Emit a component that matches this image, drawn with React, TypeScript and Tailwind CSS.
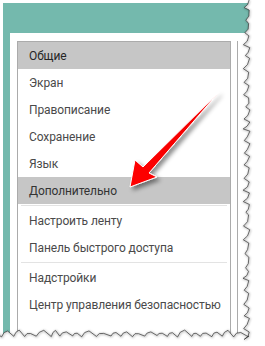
import React from "react";

function rand(seed: number) {
  const x = Math.sin(seed * 12.9898 + 78.233) * 43758.5453;
  return x - Math.floor(x);
}

function buildTornPath() {
  const right: [number, number][] = [];
  let y = 0;
  let i = 0;
  while (y < 332) {
    const period = 9 + rand(i) * 6;
    const amp = 4 + rand(i + 100) * 3;
    right.push([250 - rand(i + 200) * 1.5, y]);
    right.push([250 - amp * 0.5 + rand(i + 300), y + period * 0.45]);
    right.push([250 - amp, y + period * 0.75]);
    y += period;
    i++;
  }
  const bottom: [number, number][] = [];
  let x = 248;
  i = 50;
  while (x > 0) {
    const period = 8 + rand(i) * 7;
    const amp = 3 + rand(i + 100) * 4;
    bottom.push([x, 337 - rand(i + 200) * 1.5]);
    bottom.push([x - period * 0.5, 337 - amp]);
    bottom.push([x - period * 0.8, 335 - amp * 0.4]);
    x -= period;
    i++;
  }
  bottom.push([0, 334]);
  const edge = [...right, [249, 336] as [number, number], ...bottom];
  const edgeD = edge.map((p, k) => `${k === 0 ? "M" : "L"}${p[0].toFixed(1)},${p[1].toFixed(1)}`).join(" ");
  const fillD = `${edgeD} L0,346 L265,346 L265,0 Z`;
  return { edgeD, fillD };
}

const items = [
  { label: "Общие", sel: true, dark: true },
  { label: "Экран" },
  { label: "Правописание" },
  { label: "Сохранение" },
  { label: "Язык" },
  { label: "Дополнительно", sel: true },
  { sep: true },
  { label: "Настроить ленту" },
  { label: "Панель быстрого доступа" },
  { sep: true },
  { label: "Надстройки" },
  { label: "Центр управления безопасностью" },
];

export default function App() {
  const { edgeD, fillD } = buildTornPath();
  return (
    <div
      className="relative w-[265px] h-[346px] overflow-hidden bg-white"
      style={{ fontFamily: 'Roboto, "Noto Sans", sans-serif' }}
    >
      <div className="absolute left-[3px] top-[3px] w-[252px] h-[340px] bg-[#74b9ad] flex flex-col">
        <div className="h-[30px] shrink-0" />
        <div className="ml-[7px] flex-1 bg-white flex pt-[8px] pl-[7px]">
          <div className="w-[214px] shrink-0 border border-[#ababab] border-b-0 flex flex-col">
            {items.map((it, k) =>
              it.sep ? (
                <div key={k} className="h-[3px] shrink-0 flex items-center px-[3px]">
                  <div className="h-px w-full bg-[#e3e3e3]" />
                </div>
              ) : (
                <div
                  key={k}
                  className={`h-[27px] shrink-0 flex items-center pl-[11px] text-[12px] tracking-[-0.1px] whitespace-nowrap ${
                    it.sel ? "bg-[#c6c6c6]" : ""
                  } ${it.dark ? "text-[#262626]" : it.sel ? "text-[#333333]" : "text-[#4a4a4a]"}`}
                >
                  {it.label}
                </div>
              )
            )}
          </div>
          <div className="w-[6px] shrink-0" />
          <div className="w-px shrink-0 bg-[#ababab]" />
        </div>
      </div>

      <svg className="absolute inset-0" width={265} height={346} viewBox="0 0 265 346">
        <defs>
          <filter id="edgeShadow" x="-10%" y="-10%" width="120%" height="120%">
            <feGaussianBlur stdDeviation="0.8" />
          </filter>
          <filter id="arrowShadow" x="-30%" y="-30%" width="160%" height="160%">
            <feDropShadow dx="3" dy="3" stdDeviation="2" floodColor="#000" floodOpacity="0.45" />
          </filter>
          <linearGradient id="arrowGrad" x1="0" y1="1" x2="1" y2="0">
            <stop offset="0" stopColor="#ff0000" />
            <stop offset="0.7" stopColor="#f40000" />
            <stop offset="1" stopColor="#ff3030" />
          </linearGradient>
        </defs>
        <path d={fillD} fill="#ffffff" />
        <path d={edgeD} fill="none" stroke="#000" strokeOpacity="0.25" strokeWidth="1.6" filter="url(#edgeShadow)" transform="translate(0.5,0.5)" />
        <path d={edgeD} fill="none" stroke="#333" strokeWidth="0.7" />
        <polygon
          points="130,187 135,160 143,167 219,92 149,173 157,177"
          fill="url(#arrowGrad)"
          stroke="#ffffff"
          strokeWidth="1"
          strokeLinejoin="round"
          filter="url(#arrowShadow)"
        />
      </svg>
    </div>
  );
}
